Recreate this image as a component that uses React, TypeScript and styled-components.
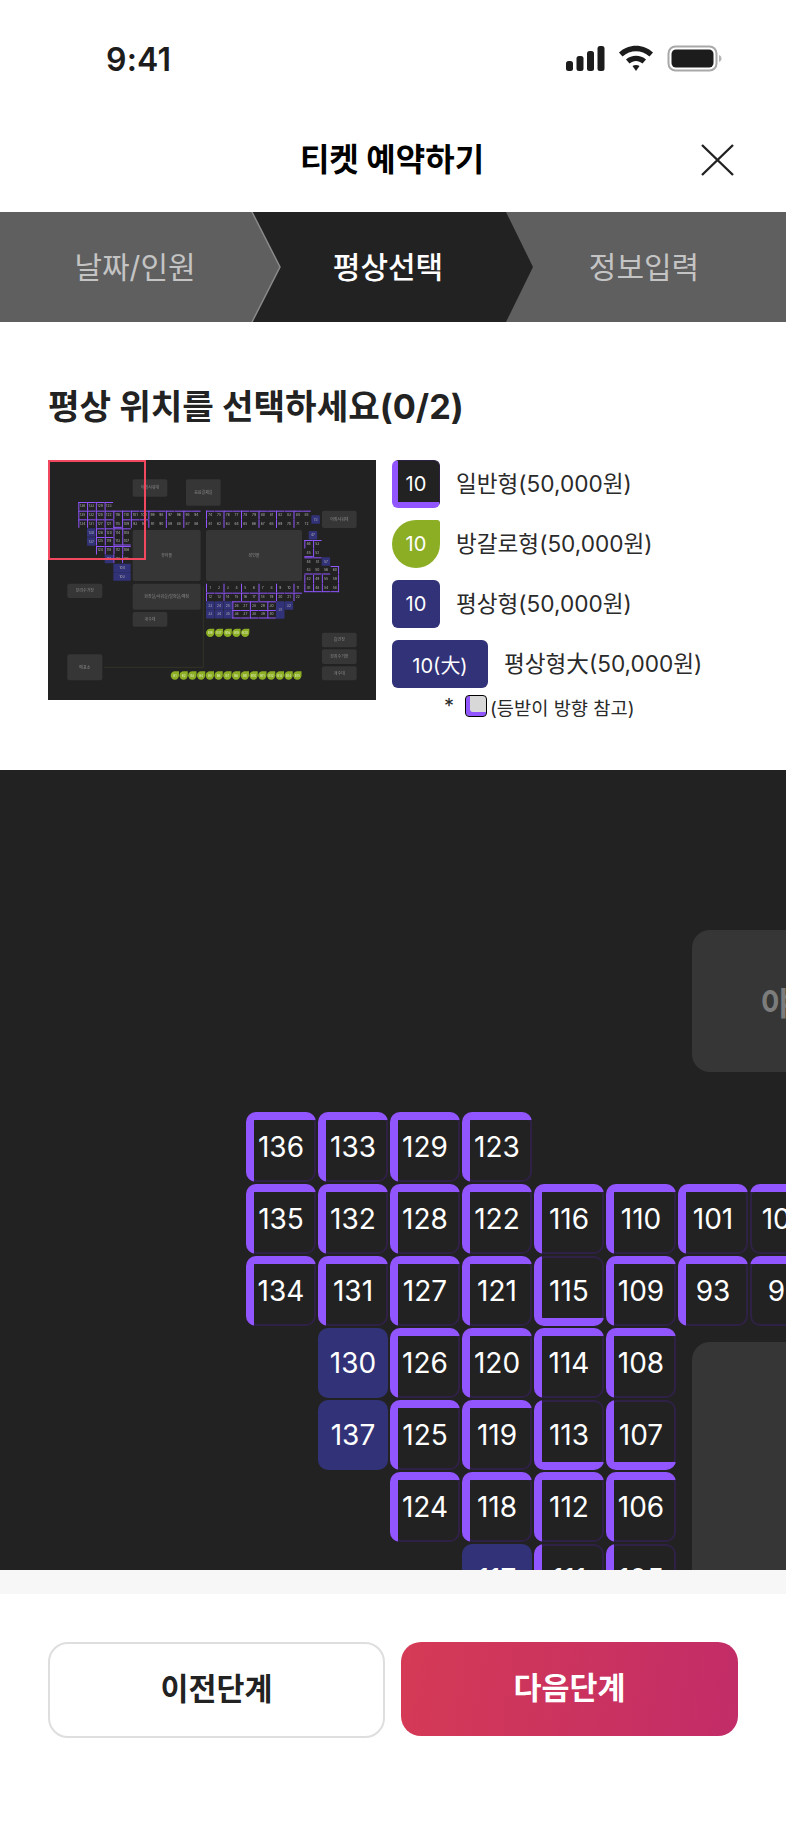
import React from 'react';
import styled, { createGlobalStyle, css } from 'styled-components';

const FONT = `Inter, "Noto Sans CJK KR", "Noto Sans", sans-serif`;
const PURPLE = '#9156ff';
const PURPLE_DIM = '#2f2145';
const NAVY = '#323278';
const OLIVE = '#8cae24';

const GlobalStyle = createGlobalStyle`
    html, body {
        margin: 0;
        padding: 0;
        background: #fff;
    }
    body {
        font-family: ${FONT};
        color: #222;
    }
`;

const Page = styled.div`
    width: 786px;
    height: 1828px;
    display: flex;
    flex-direction: column;
    overflow: hidden;
`;

const StatusBar = styled.div`
    height: 106px;
    flex: none;
    padding: 12px 64px 0 106px;
    box-sizing: border-box;
    display: flex;
    align-items: center;
    justify-content: space-between;
    svg {
        display: block;
    }
`;

const Time = styled.span`
    font-size: 32px;
    font-weight: 600;
    color: #1c1c1c;
    letter-spacing: 0.2px;
`;

const Header = styled.header`
    height: 106px;
    flex: none;
    box-sizing: border-box;
    padding: 0 2px 4px 0;
    display: flex;
    align-items: center;
    justify-content: center;
    position: relative;
    h1 {
        margin: 0;
        font-size: 32px;
        font-weight: 700;
        color: #000;
    }
    svg {
        position: absolute;
        right: 52px;
        top: 37px;
    }
`;

const StepBar = styled.nav`
    height: 110px;
    flex: none;
    display: flex;
    background: #5f5f5f;
    position: relative;
    svg {
        position: absolute;
        left: 251px;
        top: 0;
    }
`;

const Step = styled.div<{ $width: string; $active?: boolean; $pad?: number }>`
    width: ${(p) => p.$width};
    box-sizing: border-box;
    padding: 0 ${(p) => p.$pad || 0}px 4px 0;
    display: flex;
    align-items: center;
    justify-content: center;
    font-size: 30px;
    color: #c4c4c4;
    font-weight: 400;
    ${(p) =>
        p.$active &&
        css`
            margin-left: -18px;
            background: #222;
            color: #fff;
            font-weight: 500;
            clip-path: polygon(0 0, 254px 0, 281px 50%, 254px 100%, 0 100%, 28px 50%);
        `}
`;

const Guide = styled.section`
    height: 448px;
    flex: none;
    box-sizing: border-box;
    padding: 62px 48px 0;
    h2 {
        margin: 0 0 30px;
        font-size: 34.3px;
        line-height: 46px;
        font-weight: 700;
        color: #222;
    }
`;

const GuideBody = styled.div`
    display: flex;
    gap: 16px;
`;

const MiniMap = styled.div`
    width: 328px;
    height: 240px;
    flex: none;
    position: relative;
    background: #222;
    overflow: hidden;
    svg {
        display: block;
        filter: blur(0.55px);
    }
`;

const ViewFrame = styled.div`
    position: absolute;
    left: 0;
    top: 0;
    width: 98px;
    height: 100px;
    box-sizing: border-box;
    border: 2px solid #f2485f;
`;

const Legend = styled.ul`
    list-style: none;
    margin: 0;
    padding: 0;
    display: flex;
    flex-direction: column;
    gap: 12px;
`;

const LegendRow = styled.li`
    display: flex;
    align-items: center;
    height: 48px;
    gap: 16px;
    font-size: 22.6px;
    color: #2a2a2a;
`;

const LegendText = styled.span`
    margin-bottom: 4px;
`;

const Swatch = styled.span<{ $kind: 'normal' | 'leaf' | 'flat'; $wide?: boolean }>`
    width: ${(p) => (p.$wide ? 96 : 48)}px;
    height: 48px;
    flex: none;
    box-sizing: border-box;
    display: flex;
    align-items: center;
    justify-content: center;
    font-size: 20px;
    color: #fff;
    border-radius: 6px;
    ${(p) =>
        p.$kind === 'normal' &&
        css`
            background: #222;
            border-style: solid;
            border-width: 1px 1px 6px 6px;
            border-color: ${PURPLE_DIM} ${PURPLE_DIM} ${PURPLE} ${PURPLE};
            padding: 5px 5px 0 0;
        `}
    ${(p) =>
        p.$kind === 'leaf' &&
        css`
            background: ${OLIVE};
            border-radius: 50% 3px 50% 50%;
        `}
    ${(p) =>
        p.$kind === 'flat' &&
        css`
            background: ${NAVY};
        `}
`;

const Note = styled.li`
    display: flex;
    align-items: center;
    height: 24px;
    margin-top: -6px;
    padding-left: 52px;
    font-size: 18.7px;
    color: #2a2a2a;
`;

const Asterisk = styled.span`
    width: 21px;
    font-size: 20px;
`;

const BackrestIcon = styled.span`
    width: 22px;
    height: 22px;
    margin-right: 3px;
    box-sizing: border-box;
    background: #d8d8d8;
    border: 1px solid #000;
    border-radius: 4px;
    box-shadow: inset 4px -4px 0 ${PURPLE};
`;

const SeatMap = styled.section`
    height: 800px;
    flex: none;
    position: relative;
    background: #222;
    overflow: hidden;
`;

const Room = styled.div<{ $x: number; $y: number; $w: number; $h: number }>`
    position: absolute;
    left: ${(p) => p.$x}px;
    top: ${(p) => p.$y}px;
    width: ${(p) => p.$w}px;
    height: ${(p) => p.$h}px;
    display: flex;
    align-items: center;
    justify-content: center;
    background: #363636;
    border-radius: 18px;
    color: #7c7c7c;
    font-size: 32px;
    font-weight: 700;
`;

const SeatGrid = styled.div`
    position: absolute;
    left: 246px;
    top: 342px;
    display: grid;
    grid-template-columns: repeat(8, 70px);
    grid-auto-rows: 70px;
    gap: 2px;
`;

const band = (edges: string, side: string) => (edges.includes(side) ? 8 : 2);
// 두 변이 모두 얇은 모서리만 안쪽을 크게 둥글린다
const corner = (edges: string, a: string, b: string) => (edges.includes(a) || edges.includes(b) ? 3 : 8);

const Seat = styled.div<{ $col: number; $row: number; $edges?: string }>`
    grid-column: ${(p) => p.$col};
    grid-row: ${(p) => p.$row};
    position: relative;
    display: flex;
    align-items: center;
    justify-content: center;
    border-radius: 10px;
    background: ${(p) => (p.$edges ? PURPLE_DIM : NAVY)};
    color: #fff;
    font-size: 28px;
    font-weight: 380;
    ${(p) =>
        p.$edges &&
        css`
            &::before {
                content: '';
                position: absolute;
                inset: 0;
                border-radius: 10px;
                background:
                    ${p.$edges.includes('T') ? `linear-gradient(${PURPLE}, ${PURPLE}) top / 100% 8px no-repeat,` : ''}
                    ${p.$edges.includes('B') ? `linear-gradient(${PURPLE}, ${PURPLE}) bottom / 100% 8px no-repeat,` : ''}
                    ${p.$edges.includes('L') ? `linear-gradient(${PURPLE}, ${PURPLE}) left / 8px 100% no-repeat,` : ''}
                    none;
            }
            &::after {
                content: '';
                position: absolute;
                top: ${band(p.$edges, 'T')}px;
                right: 2px;
                bottom: ${band(p.$edges, 'B')}px;
                left: ${band(p.$edges, 'L')}px;
                background: #222;
                border-radius: ${corner(p.$edges, 'T', 'L')}px ${corner(p.$edges, 'T', 'R')}px ${corner(p.$edges, 'B', 'R')}px ${corner(p.$edges, 'B', 'L')}px;
            }
        `}
`;

const SeatLabel = styled.span`
    position: relative;
    z-index: 1;
`;

const FooterStrip = styled.div`
    height: 24px;
    flex: none;
    background: #f7f7f7;
`;

const Footer = styled.footer`
    flex: 1;
    padding: 48px 48px 0;
    display: flex;
    gap: 16px;
    align-items: flex-start;
`;

const FooterButton = styled.button<{ $primary?: boolean }>`
    width: 337px;
    height: ${(p) => (p.$primary ? 94 : 96)}px;
    box-sizing: border-box;
    border-radius: 20px;
    font-family: ${FONT};
    font-size: 30.4px;
    font-weight: 700;
    padding: 0 0 6px;
    ${(p) =>
        p.$primary
            ? css`
                  border: 0;
                  color: #fff;
                  background: linear-gradient(100deg, #d53a55, #c22c68);
              `
            : css`
                  border: 2px solid #dedede;
                  color: #222;
                  background: #fff;
              `}
`;

// 큰 지도에 보이는 좌석 [번호, 열, 행, 강조 테두리] - 빈 값이면 평상형
const seats: [string, number, number, string][] = [
    ['136', 1, 1, 'TL'], ['133', 2, 1, 'TL'], ['129', 3, 1, 'TL'], ['123', 4, 1, 'TL'],
    ['135', 1, 2, 'TL'], ['132', 2, 2, 'TL'], ['128', 3, 2, 'TL'], ['122', 4, 2, 'TL'],
    ['116', 5, 2, 'TL'], ['110', 6, 2, 'TL'], ['101', 7, 2, 'TL'], ['100', 8, 2, 'T'],
    ['134', 1, 3, 'TL'], ['131', 2, 3, 'TL'], ['127', 3, 3, 'TL'], ['121', 4, 3, 'TL'],
    ['115', 5, 3, 'LB'], ['109', 6, 3, 'TL'], ['93', 7, 3, 'TL'], ['92', 8, 3, 'T'],
    ['130', 2, 4, ''], ['126', 3, 4, 'TL'], ['120', 4, 4, 'TL'], ['114', 5, 4, 'TL'], ['108', 6, 4, 'TL'],
    ['137', 2, 5, ''], ['125', 3, 5, 'TL'], ['119', 4, 5, 'TL'], ['113', 5, 5, 'LB'], ['107', 6, 5, 'LB'],
    ['124', 3, 6, 'TL'], ['118', 4, 6, 'TL'], ['112', 5, 6, 'TL'], ['106', 6, 6, 'TL'],
    ['117', 4, 7, ''], ['111', 5, 7, 'L'], ['105', 6, 7, 'L'],
];

const rooms = [
    { name: '야외샤워대', x: 692, y: 160, w: 285, h: 142 },
    { name: '음료결제실', x: 1130, y: 160, w: 285, h: 216 },
    { name: '유아풀', x: 692, y: 572, w: 560, h: 420 },
];

// 미니맵 좌표는 3배 스케일(viewBox) 기준
const P = 26.25;
type MiniSeat = { label: string; x: number; y: number; kind: 'seat' | 'navy' | 'leaf'; edges?: string; w?: number; h?: number };

const miniRow = (labels: (string | number)[], x: number, y: number, pick: (i: number) => string, kind: MiniSeat['kind'] = 'seat'): MiniSeat[] =>
    labels.map((l, i) => ({ label: String(l), x: x + i * P, y, kind, edges: pick(i) }));

const range = (a: number, b: number) => Array.from({ length: b - a + 1 }, (_, i) => a + i);
const pairs = (i: number) => (i % 2 === 0 ? 'TL' : 'T');
const TL = () => 'TL';
const T = () => 'T';
const L = () => 'L';

const miniSeats: MiniSeat[] = [
    ...miniRow([136, 133, 129, 123], 145, 186, TL),
    ...miniRow([135, 132, 128, 122, 116, 110, 101, 100], 145, 212, (i) => (i === 7 ? 'T' : 'TL')),
    ...miniRow([99, 98, 97, 96, 95, 94], 355, 212, pairs),
    ...miniRow([134, 131, 127, 121, 115, 109, 93, 92], 145, 238, (i) => (i === 4 ? 'LB' : i === 7 ? 'T' : 'TL')),
    ...miniRow([91, 90, 89, 88, 87, 86], 355, 238, (i) => (i % 2 === 0 ? 'L' : '')),
    ...miniRow([130, 137], 171, 265, () => '', 'navy').map((s, i) => ({ ...s, x: 171, y: 265 + i * 26.5 })),
    ...miniRow([126, 120, 114, 108], 198, 265, TL),
    ...miniRow([125, 119, 113, 107], 198, 291, (i) => (i > 1 ? 'LB' : 'TL')),
    ...miniRow([124, 118, 112, 106], 198, 318, TL),
    { label: '117', x: 224, y: 344, kind: 'navy' },
    ...miniRow([111, 105], 250, 344, L),
    { label: '104', x: 250, y: 371, kind: 'navy', w: 52 },
    { label: '103', x: 250, y: 397, kind: 'navy', w: 52 },
    ...miniRow(range(74, 85), 528, 212, pairs),
    ...miniRow(range(61, 72), 528, 238, (i) => (i % 2 === 0 ? 'L' : '')),
    { label: '73', x: 844, y: 226, kind: 'navy' },
    { label: '47', x: 836, y: 273, kind: 'navy' },
    ...miniRow([46, 53], 823, 300, TL),
    ...miniRow([45, 52], 823, 326, (i) => (i === 0 ? 'B' : 'L')),
    ...miniRow([44, 51], 823, 352, T),
    { label: '57', x: 875, y: 352, kind: 'navy' },
    ...miniRow([43, 50, 56, 60], 823, 378, (i) => (i === 3 ? 'TR' : 'B')),
    ...miniRow([42, 49, 55, 59], 823, 405, (i) => (i === 3 ? 'R' : 'L')),
    ...miniRow([41, 48, 54, 58], 823, 431, (i) => (i === 3 ? 'RB' : 'LB')),
    ...miniRow(range(1, 11), 528, 431, (i) => (i % 2 === 0 ? 'L' : '')),
    ...miniRow(range(12, 22), 528, 458, (i) => (i % 2 === 0 ? 'TL' : 'T')),
    ...miniRow([23, 24, 25], 528, 484, () => '', 'navy'),
    ...miniRow([26, 27, 28, 29, 30], 607, 484, (i) => (i % 2 === 0 ? 'TL' : 'T')),
    { label: '31', x: 738, y: 484, kind: 'navy', h: 52 },
    { label: '32', x: 764, y: 484, kind: 'navy' },
    ...miniRow([33, 34, 35], 528, 510, () => '', 'navy'),
    ...miniRow([36, 37, 38, 39, 40], 607, 510, (i) => (i % 2 === 0 ? 'TLB' : 'TB')),
    ...miniRow(range(16, 20).map((n) => `B${n}`), 528, 566, () => '', 'leaf'),
    ...miniRow(range(1, 15).map((n) => `B${n}`), 422, 694, () => '', 'leaf'),
];

const miniRooms: [string, number, number, number, number][] = [
    ['야외샤워대', 308, 118, 104, 52],
    ['음료결제실', 468, 118, 104, 79],
    ['야외샤워대', 876, 212, 104, 52],
    ['유아풀', 308, 270, 204, 153],
    ['성인풀', 528, 270, 288, 153],
    ['분리수거장', 112, 431, 105, 43],
    ['화장실/샤워실/탈의실/매점', 308, 431, 204, 78],
    ['개수대', 308, 516, 104, 44],
    ['매표소', 112, 643, 105, 78],
    ['흡연장', 876, 578, 104, 44],
    ['분리수거장', 876, 628, 104, 44],
    ['개수대', 876, 679, 104, 42],
];

const MiniSeatShape: React.FC<{ seat: MiniSeat }> = ({ seat }) => {
    const { x, y, kind, label, edges = '', w = 25.5, h = 25.5 } = seat;
    const textY = y + h / 2 + 3.5;
    if (kind === 'leaf') {
        return (
            <g>
                <path d={`M${x + 12.5} ${y}H${x + 25}V${y + 12.5}A12.5 12.5 0 0 1 ${x} ${y + 12.5}A12.5 12.5 0 0 1 ${x + 12.5} ${y}Z`} fill={OLIVE} />
                <text x={x + 12.5} y={textY} fontSize="9" fill="#e8efcc" textAnchor="middle">{label}</text>
            </g>
        );
    }
    return (
        <g>
            <rect x={x} y={y} width={w} height={h} rx="2" fill={kind === 'navy' ? NAVY : '#222'} />
            {edges.includes('T') && <rect x={x} y={y} width={w} height="3" fill={PURPLE} />}
            {edges.includes('B') && <rect x={x} y={y + h - 3} width={w} height="3" fill={PURPLE} />}
            {edges.includes('L') && <rect x={x} y={y} width="3" height={h} fill={PURPLE} />}
            {edges.includes('R') && <rect x={x + w - 3} y={y} width="3" height={h} fill={PURPLE} />}
            <text x={x + w / 2} y={textY} fontSize="10" fill="#b4b4b4" textAnchor="middle">{label}</text>
        </g>
    );
};

const MiniMapDrawing: React.FC = () => (
    <svg width="328" height="240" viewBox="54 60 984 720" fontFamily={FONT}>
        <path d="M222 682H520V440" fill="none" stroke="#3b3e2c" strokeWidth="2" />
        {miniRooms.map(([name, x, y, w, h]) => (
            <g key={`${name}${x}${y}`}>
                <rect x={x} y={y} width={w} height={h} rx="6" fill="#363636" />
                <text x={x + w / 2} y={y + h / 2 + 4} fontSize="12" fill="#8a8a8a" textAnchor="middle">{name}</text>
            </g>
        ))}
        {miniSeats.map((s) => (
            <MiniSeatShape key={`${s.label}${s.x}${s.y}`} seat={s} />
        ))}
    </svg>
);

const App: React.FC = () => {
    return (
        <Page>
            <GlobalStyle />
            <StatusBar>
                <Time>9:41</Time>
                <svg width="156" height="28" viewBox="0 0 156 28">
                    <g fill="#1c1c1c">
                        <rect x="0" y="16" width="7" height="10" rx="2.5" />
                        <rect x="10.5" y="11" width="7" height="15" rx="2.5" />
                        <rect x="21" y="6" width="7" height="20" rx="2.5" />
                        <rect x="31.5" y="1" width="7" height="25" rx="2.5" />
                        <path d="M53 7.5C62.5 -1.5 77.5 -1.5 87 7.5L83.5 11.5C75.5 4.5 64.5 4.5 56.5 11.5Z" />
                        <path d="M60 14.5C65.5 9.5 74.5 9.5 80 14.5L76.5 18.5C72.5 15 67.5 15 63.5 18.5Z" />
                        <path d="M66.5 21C68.5 19.5 71.5 19.5 73.5 21L70 26Z" />
                    </g>
                    <rect x="102.5" y="1.5" width="48" height="24" rx="7" fill="none" stroke="#a8a8a8" strokeWidth="2" />
                    <rect x="105.5" y="4.5" width="42" height="18" rx="4.5" fill="#1c1c1c" />
                    <path d="M153 10V17C155 16.3 155.5 14.8 155.5 13.5S155 10.7 153 10Z" fill="#b5b5b5" />
                </svg>
            </StatusBar>
            <Header>
                <h1>티켓 예약하기</h1>
                <svg width="34" height="34" viewBox="0 0 34 34">
                    <path d="M2 2L33 32M33 2L2 32" stroke="#222" strokeWidth="2.4" fill="none" />
                </svg>
            </Header>
            <StepBar>
                <Step $width="270px">날짜/인원</Step>
                <Step $width="281px" $active $pad={9}>평상선택</Step>
                <Step $width="253px" $pad={31}>정보입력</Step>
                <svg width="30" height="110" viewBox="0 0 30 110">
                    <path d="M1 0L29 55L1 110" fill="none" stroke="#8a8a8a" strokeWidth="1.5" />
                </svg>
            </StepBar>
            <Guide>
                <h2>평상 위치를 선택하세요(0/2)</h2>
                <GuideBody>
                    <MiniMap>
                        <MiniMapDrawing />
                        <ViewFrame />
                    </MiniMap>
                    <Legend>
                        <LegendRow><Swatch $kind="normal">10</Swatch><LegendText>일반형(50,000원)</LegendText></LegendRow>
                        <LegendRow><Swatch $kind="leaf">10</Swatch><LegendText>방갈로형(50,000원)</LegendText></LegendRow>
                        <LegendRow><Swatch $kind="flat">10</Swatch><LegendText>평상형(50,000원)</LegendText></LegendRow>
                        <LegendRow><Swatch $kind="flat" $wide>10(大)</Swatch><LegendText>평상형大(50,000원)</LegendText></LegendRow>
                        <Note><Asterisk>*</Asterisk><BackrestIcon />(등받이 방향 참고)</Note>
                    </Legend>
                </GuideBody>
            </Guide>
            <SeatMap>
                {rooms.map((r) => (
                    <Room key={r.name} $x={r.x} $y={r.y} $w={r.w} $h={r.h}>{r.name}</Room>
                ))}
                <SeatGrid>
                    {seats.map(([label, col, row, edges]) => (
                        <Seat key={label} $col={col} $row={row} $edges={edges}>
                            <SeatLabel>{label}</SeatLabel>
                        </Seat>
                    ))}
                </SeatGrid>
            </SeatMap>
            <FooterStrip />
            <Footer>
                <FooterButton>이전단계</FooterButton>
                <FooterButton $primary>다음단계</FooterButton>
            </Footer>
        </Page>
    );
};

export default App;
